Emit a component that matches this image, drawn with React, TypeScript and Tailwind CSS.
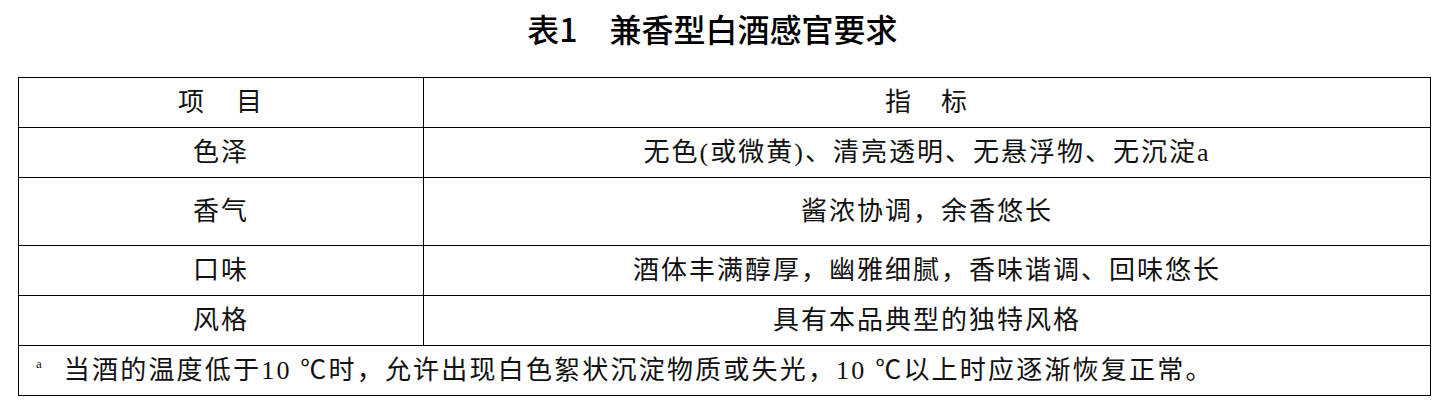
import React from "react";

const font = {
  fontFamily: '"Liberation Serif", "Noto Sans CJK SC", serif',
};

function Row({
  label,
  value,
  h,
  first,
}: {
  label: React.ReactNode;
  value: React.ReactNode;
  h: string;
  first?: boolean;
}) {
  return (
    <div className={`flex ${h} ${first ? "" : "border-t border-black"}`}>
      <div className="w-[404px] flex items-center justify-center">{label}</div>
      <div className="flex-1 flex items-center justify-center border-l border-black">{value}</div>
    </div>
  );
}

export default function App() {
  return (
    <div className="w-[1449px] h-[415px] bg-white text-[#111]">
      <div
        className="h-[77px] pt-[12px] flex justify-center pr-[24px] text-[32px] leading-[33px] font-medium text-black"
        style={{ fontFamily: '"Noto Sans CJK SC", sans-serif' }}
      >
        <span>表1</span>
        <span className="ml-[32px]">兼香型白酒感官要求</span>
      </div>
      <div
        className="ml-[18px] w-[1413px] border border-black text-[26px] tracking-[2px] leading-none"
        style={font}
      >
        <Row
          first
          h="h-[49px]"
          label={
            <span className="flex">
              <span>项</span>
              <span className="inline-block w-[30px]" />
              <span>目</span>
            </span>
          }
          value={"指\u3000标"}
        />
        <Row h="h-[50px]" label="色泽" value="无色(或微黄)、清亮透明、无悬浮物、无沉淀a" />
        <Row h="h-[68px]" label="香气" value="酱浓协调，余香悠长" />
        <Row h="h-[50px]" label="口味" value="酒体丰满醇厚，幽雅细腻，香味谐调、回味悠长" />
        <Row h="h-[50px]" label="风格" value="具有本品典型的独特风格" />
        <div className="h-[50px] border-t border-black flex items-center pl-[17px]">
          <span className="text-[13px] self-start mt-[11px] mr-[22px] tracking-normal">a</span>
          <span className="tracking-[2.2px]">当酒的温度低于10 ℃时，允许出现白色絮状沉淀物质或失光，10 ℃以上时应逐渐恢复正常。</span>
        </div>
      </div>
    </div>
  );
}
